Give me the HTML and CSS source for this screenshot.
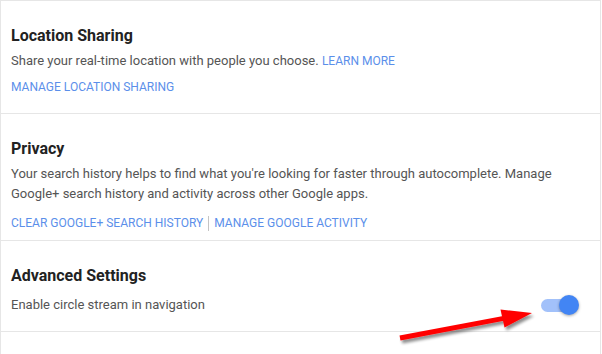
FILE: index.html
```html
<!DOCTYPE html>
<html lang="en">
<head>
    <meta charset="UTF-8">
    <title>Settings</title>
    <link rel="stylesheet" href="styles.css">
</head>
<body>

<div class="panel">

    <!-- Location sharing -->
    <div class="section section-location">
        <h3 class="title">Location Sharing</h3>
        <p class="desc">Share your real-time location with people you choose. <a class="link" href="#">Learn more</a></p>
        <div class="links">
            <a class="link" href="#">Manage location sharing</a>
        </div>
    </div>

    <!-- Privacy -->
    <div class="section section-privacy">
        <h3 class="title">Privacy</h3>
        <p class="desc">Your search history helps to find what you're looking for faster through autocomplete. Manage Google+ search history and activity across other Google apps.</p>
        <div class="links">
            <a class="link" href="#">Clear Google+ search history</a>
            <span class="divider"></span>
            <a class="link" href="#">Manage Google activity</a>
        </div>
    </div>

    <!-- Advanced -->
    <div class="section section-advanced">
        <h3 class="title">Advanced Settings</h3>
        <div class="row">
            <p class="desc">Enable circle stream in navigation</p>
            <div class="toggle on">
                <span class="track"></span>
                <span class="knob"></span>
            </div>
        </div>
    </div>

    <div class="section section-empty"></div>
</div>

<!-- annotation arrow -->
<svg class="arrow" width="602" height="354" viewBox="0 0 602 354">
    <defs>
        <filter id="shadow" x="-10%" y="-50%" width="130%" height="200%">
            <feGaussianBlur in="SourceAlpha" stdDeviation="1.5"/>
            <feOffset dx="2" dy="3"/>
            <feComponentTransfer><feFuncA type="linear" slope="0.45"/></feComponentTransfer>
            <feMerge><feMergeNode/><feMergeNode in="SourceGraphic"/></feMerge>
        </filter>
    </defs>
    <g filter="url(#shadow)" fill="#ff0000">
        <polygon points="399.5,335.6 503.2,316 504,320.8 400.5,340.4"/>
        <polygon points="532,313 500.5,309.5 504.5,327.5"/>
    </g>
</svg>

</body>
</html>
```

FILE: styles.css
```css
body {
    margin: 0;
    font-family: Roboto, "Liberation Sans", Arial, sans-serif;
    background: #ffffff;
    position: relative;
}

.panel {
    width: 599px;
    border: 1px solid #e6e6e6;
    border-bottom: none;
}

.section {
    padding: 25px 10px 0;
    border-bottom: 1px solid #e6e6e6;
    box-sizing: border-box;
}

.section-location {
    height: 113px;
}

.section-privacy {
    height: 127px;
}

.section-advanced {
    height: 91px;
}

.section-empty {
    height: 30px;
    border-bottom: none;
}

.title {
    margin: 0 0 5px;
    font-size: 16px;
    line-height: 20px;
    font-weight: 700;
    color: #222222;
}

.desc {
    margin: 0;
    font-size: 13px;
    line-height: 20px;
    color: #555555;
}

.link {
    color: #5b8fea;
    text-decoration: none;
    text-transform: uppercase;
    font-size: 12px;
}

.links {
    margin-top: 6px;
    line-height: 20px;
    display: flex;
    align-items: center;
}

.section-privacy .links {
    margin-top: 9px;
}

.divider {
    display: inline-block;
    width: 1px;
    height: 15px;
    background: #c4c4c4;
    margin: 0 5px;
}

.row {
    margin-top: 9px;
    display: flex;
    align-items: center;
    justify-content: space-between;
}

/* Toggle switch */
.toggle {
    position: relative;
    width: 38px;
    height: 20px;
    margin-right: 11px;
}

.toggle .track {
    position: absolute;
    left: 0;
    top: 4px;
    width: 32px;
    height: 13px;
    border-radius: 7px;
    background: #a2c1fa;
}

.toggle .knob {
    position: absolute;
    right: 0;
    top: 0;
    width: 20px;
    height: 20px;
    border-radius: 50%;
    background: #4285f4;
    box-shadow: 0 1px 3px rgba(0, 0, 0, 0.35);
}

.arrow {
    position: absolute;
    left: 0;
    top: 0;
    pointer-events: none;
}
```
